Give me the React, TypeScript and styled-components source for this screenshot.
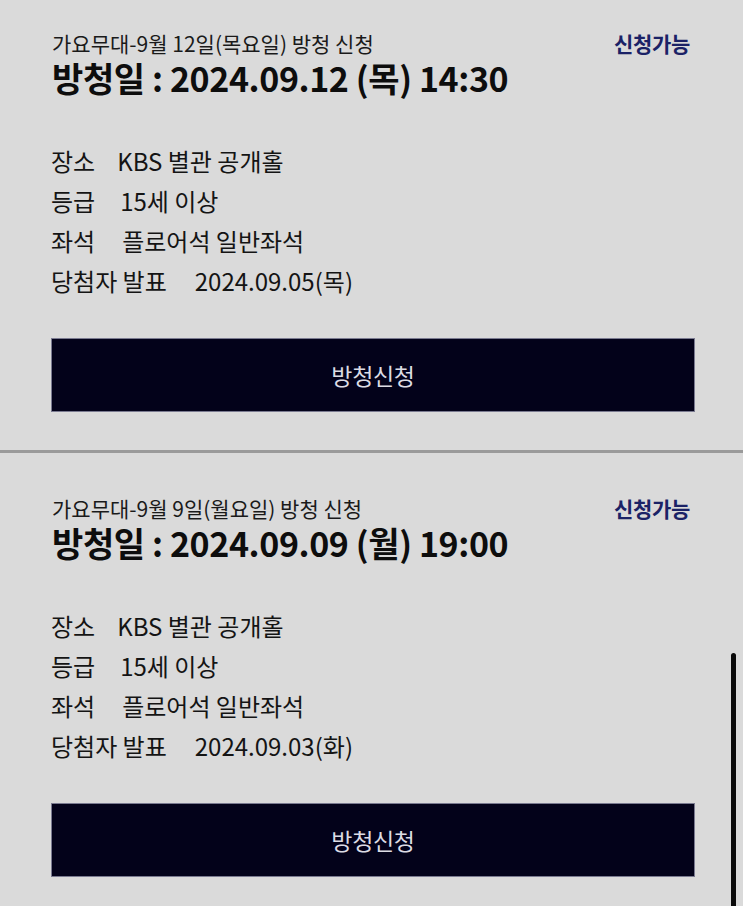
import styled, { createGlobalStyle } from 'styled-components'

interface Show {
  subtitle: string
  date: string
  place: string
  grade: string
  seat: string
  announce: string
}

const shows: Show[] = [
  {
    subtitle: '가요무대-9월 12일(목요일) 방청 신청',
    date: '방청일 : 2024.09.12 (목) 14:30',
    place: 'KBS 별관 공개홀',
    grade: '15세 이상',
    seat: '플로어석 일반좌석',
    announce: '2024.09.05(목)',
  },
  {
    subtitle: '가요무대-9월 9일(월요일) 방청 신청',
    date: '방청일 : 2024.09.09 (월) 19:00',
    place: 'KBS 별관 공개홀',
    grade: '15세 이상',
    seat: '플로어석 일반좌석',
    announce: '2024.09.03(화)',
  },
]

export default function App() {
  return (
    <>
      <GlobalStyle />
      <Page>
        <List>
          {shows.map((show, i) => (
            <Card key={show.date} divider={i > 0 ? 1 : 0}>
              <Header>
                <Subtitle>{show.subtitle}</Subtitle>
                <Status>신청가능</Status>
              </Header>
              <DateTitle>{show.date}</DateTitle>
              <Info>
                <InfoRow>
                  <Label>장소</Label>
                  <Value>{show.place}</Value>
                </InfoRow>
                <InfoRow>
                  <Label>등급</Label>
                  <Value indent={3}>{show.grade}</Value>
                </InfoRow>
                <InfoRow>
                  <Label>좌석</Label>
                  <Value indent={5}>{show.seat}</Value>
                </InfoRow>
                <InfoRow>
                  <Label>당첨자 발표</Label>
                  <Value indent={6}>{show.announce}</Value>
                </InfoRow>
              </Info>
              <ApplyButton>방청신청</ApplyButton>
            </Card>
          ))}
        </List>
        <Scrollbar />
      </Page>
    </>
  )
}

const GlobalStyle = createGlobalStyle`
  html, body {
    margin: 0;
    padding: 0;
    background: #dadada;
  }
  body {
    font-family: 'Noto Sans CJK KR', 'Noto Sans', sans-serif;
    color: #111;
  }
`

const Page = styled.div`
  position: relative;
  width: 743px;
  height: 906px;
  overflow: hidden;
  background: #dadada;
`

// the list is scrolled a little, so the first card starts above the top edge
const List = styled.div`
  display: flex;
  flex-direction: column;
  margin-top: -12px;
`

const Card = styled.section<{ divider: number }>`
  padding: 42px 48px 38px 51px;
  border-top: ${({ divider }) => (divider ? '3px solid #9a9a9a' : 'none')};
`

const Header = styled.div`
  display: flex;
  justify-content: space-between;
  align-items: center;
  height: 26px;
`

const Subtitle = styled.div`
  font-size: 21px;
  line-height: 26px;
  color: #1a1a1a;
  padding-left: 1px;
`

const Status = styled.div`
  font-size: 21px;
  line-height: 26px;
  font-weight: 700;
  color: #1b2266;
  letter-spacing: -0.3px;
  padding-right: 5px;
`

const DateTitle = styled.div`
  font-size: 34px;
  font-weight: 700;
  line-height: 44px;
  letter-spacing: -0.4px;
  color: #0d0d0d;
  padding-left: 1px;
`

const Info = styled.div`
  display: flex;
  flex-direction: column;
  margin-top: 41px;
`

const InfoRow = styled.div`
  display: flex;
  gap: 22px;
  height: 40px;
  align-items: center;
  font-size: 24px;
  line-height: 32px;
  color: #141414;
`

const Label = styled.span``

const Value = styled.span<{ indent?: number }>`
  padding-left: ${({ indent }) => indent ?? 0}px;
`

const ApplyButton = styled.button`
  display: flex;
  align-items: center;
  justify-content: center;
  width: 100%;
  height: 74px;
  margin-top: 37px;
  border: 1px solid #7a7a90;
  background: #03021a;
  color: #dcdce4;
  font-family: inherit;
  font-size: 23px;
  letter-spacing: -0.3px;
`

const Scrollbar = styled.div`
  position: absolute;
  right: 7px;
  top: 653px;
  bottom: 0;
  width: 5px;
  border-radius: 3px 3px 0 0;
  background: #0a0a0a;
`
